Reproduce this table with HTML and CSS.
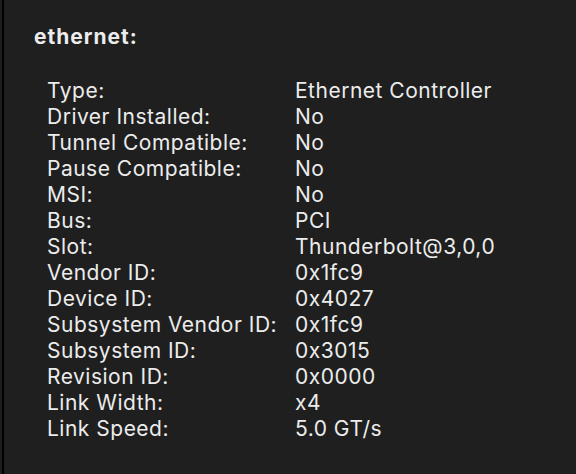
FILE: index.html
```html
<!DOCTYPE html>
<html>
<head>
<meta charset="utf-8">
<link rel="stylesheet" href="styles.css">
</head>
<body>
<div class="edge"></div>
<main class="panel">
  <h1 class="title">ethernet:</h1>
  <dl class="props">
    <dt>Type:</dt><dd>Ethernet Controller</dd>
    <dt>Driver Installed:</dt><dd>No</dd>
    <dt>Tunnel Compatible:</dt><dd>No</dd>
    <dt>Pause Compatible:</dt><dd>No</dd>
    <dt>MSI:</dt><dd>No</dd>
    <dt>Bus:</dt><dd>PCI</dd>
    <dt>Slot:</dt><dd>Thunderbolt@3,0,0</dd>
    <dt>Vendor ID:</dt><dd>0x1fc9</dd>
    <dt>Device ID:</dt><dd>0x4027</dd>
    <dt>Subsystem Vendor ID:</dt><dd>0x1fc9</dd>
    <dt>Subsystem ID:</dt><dd>0x3015</dd>
    <dt>Revision ID:</dt><dd>0x0000</dd>
    <dt>Link Width:</dt><dd>x4</dd>
    <dt>Link Speed:</dt><dd>5.0 GT/s</dd>
  </dl>
</main>
</body>
</html>
```
FILE: styles.css
```css
html, body {
  margin: 0;
  padding: 0;
  height: 100%;
  background: #1f1f1f;
}
body {
  display: flex;
  font-family: Inter, "Noto Sans", sans-serif;
  color: #ececec;
}
.edge {
  width: 2px;
  margin-left: 2px;
  background: #000;
  flex: none;
}
.panel {
  flex: 1;
  padding: 25px 0 0 30px;
}
.title {
  margin: 0;
  font-size: 21px;
  font-weight: 700;
  line-height: 24px;
  letter-spacing: 1px;
}
.props {
  margin: 29px 0 0 13px;
  display: grid;
  grid-template-columns: 248px auto;
  font-size: 21px;
  line-height: 26px;
  letter-spacing: 0.5px;
}
.props dt, .props dd {
  margin: 0;
}
```
